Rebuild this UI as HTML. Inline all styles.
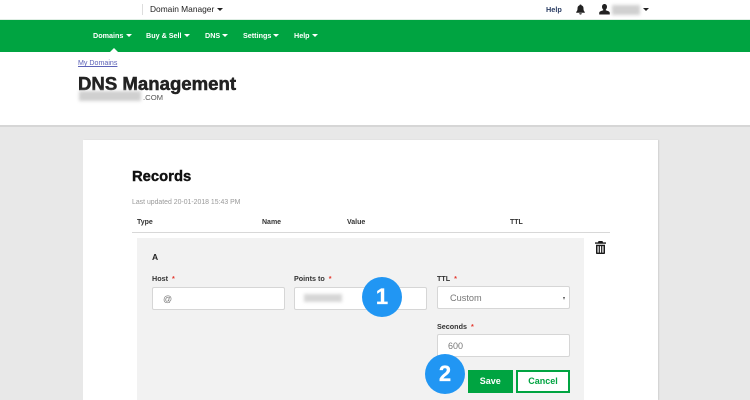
<!DOCTYPE html>
<html>
<head>
<meta charset="utf-8">
<style>
html,body{margin:0;padding:0}
body{width:750px;height:400px;overflow:hidden;position:relative;background:#e8e8e8;font-family:"Liberation Sans",sans-serif;color:#222}
.a{position:absolute;white-space:nowrap}
.tri{position:absolute;width:0;height:0;border-left:3px solid transparent;border-right:3px solid transparent;border-top:3.500px solid #fff}
.tri.d{border-left-width:3px;border-right-width:3px;border-top-width:3.500px;border-top-color:#222}
.nav{font-size:7.200px;font-weight:bold;color:#fff;top:31px;line-height:10px}
.lbl{font-size:7.200px;font-weight:bold;color:#333;line-height:10px}
.lbl i{color:#e4392f;font-style:normal;margin-left:4px}
.th{font-size:7px;font-weight:bold;color:#333;line-height:10px;top:218px}
.inp{position:absolute;box-sizing:border-box;background:#fff;border:1px solid #d6d6d6;border-radius:2px;height:23px;color:#777;font-size:9px;line-height:23px}
.blur{position:absolute;background:#d0d0d0;filter:blur(1.500px)}
.num{position:absolute;width:40px;height:40px;border-radius:50%;background:#2196f3;color:#fff;font-weight:bold;font-size:22px;line-height:40px;text-align:center;-webkit-text-stroke:.3px #fff}
</style>
</head>
<body>
<div class="a" style="left:0;top:0;width:750px;height:125px;background:#fff;border-bottom:2px solid #d6d6d6"></div>

<div class="a" style="left:142px;top:4px;width:1px;height:11px;background:#ddd"></div>
<div class="a" style="left:150px;top:4px;font-size:8.400px;line-height:11px;color:#222">Domain Manager</div>
<div class="tri d" style="left:217px;top:8px"></div>

<div class="a" style="left:546px;top:4px;font-size:7.300px;font-weight:bold;line-height:11px;color:#2a3d63">Help</div>
<svg class="a" style="left:576px;top:4px" width="9" height="11" viewBox="0 0 9 11"><path fill="#222" d="M4.500 0.500c.6 0 1 .4 1 .9 1.500.4 2 1.600 2 3.100 0 2 .5 2.500 1.300 3.500v.7H.2v-.7C1 7 1.500 6.500 1.500 4.500c0-1.500.5-2.700 2-3.100 0-.5.4-.9 1-.9zM3.200 9.200h2.600c0 .8-.6 1.300-1.300 1.300s-1.300-.5-1.300-1.300z"/></svg>
<svg class="a" style="left:599px;top:4px" width="11" height="11" viewBox="0 0 11 11"><path fill="#222" d="M5.500 0C7 0 8 1.200 8 2.800 8 4 7.500 5 6.800 5.600v.8c1.800.4 4 1 4 2.600V10.500H.2V9c0-1.600 2.200-2.200 4-2.600v-.8C3.500 5 3 4 3 2.800 3 1.200 4 0 5.500 0z"/></svg>
<div class="blur" style="left:612px;top:5px;width:28px;height:10px"></div>
<div class="tri d" style="left:643px;top:8px"></div>

<div class="a" style="left:0;top:19px;width:750px;height:33px;background:#00a441;border-top:1px solid #dfeee4;box-sizing:border-box"></div>
<div class="a nav" style="left:93px">Domains</div><div class="tri" style="left:126px;top:34px"></div>
<div class="a nav" style="left:146px">Buy &amp; Sell</div><div class="tri" style="left:184px;top:34px"></div>
<div class="a nav" style="left:205px">DNS</div><div class="tri" style="left:222px;top:34px"></div>
<div class="a nav" style="left:243px">Settings</div><div class="tri" style="left:273px;top:34px"></div>
<div class="a nav" style="left:294px">Help</div><div class="tri" style="left:312px;top:34px"></div>
<div class="a" style="left:110px;top:48px;width:0;height:0;border-left:4px solid transparent;border-right:4px solid transparent;border-bottom:4px solid #fff"></div>

<div class="a" style="left:78px;top:58px;font-size:7.100px;line-height:10px;color:#5c62b8;text-decoration:underline">My Domains</div>
<div class="a" style="left:78px;top:72px;font-size:18.600px;font-weight:bold;line-height:24px;color:#222;-webkit-text-stroke:.5px #222">DNS Management</div>
<div class="blur" style="left:79px;top:91px;width:62px;height:10px"></div>
<div class="a" style="left:143px;top:92px;font-size:7.700px;line-height:11px;color:#555">.COM</div>

<div class="a" style="left:83px;top:140px;width:575px;height:260px;background:#fff;box-shadow:1px 0 1px #d0d0d0"></div>
<div class="a" style="left:132px;top:168px;font-size:14.800px;font-weight:bold;line-height:19px;color:#111;-webkit-text-stroke:.4px #111">Records</div>
<div class="a" style="left:132px;top:198px;font-size:6.900px;line-height:10px;color:#999">Last updated 20-01-2018 15:43 PM</div>
<div class="a th" style="left:137px">Type</div>
<div class="a th" style="left:262px">Name</div>
<div class="a th" style="left:347px">Value</div>
<div class="a th" style="left:510px">TTL</div>
<div class="a" style="left:132px;top:232px;width:478px;height:1px;background:#d8d8d8"></div>

<div class="a" style="left:137px;top:238px;width:447px;height:162px;background:#f2f2f2"></div>
<div class="a" style="left:152px;top:252px;font-size:8.500px;font-weight:bold;line-height:11px;color:#222">A</div>

<div class="a lbl" style="left:152px;top:274px">Host<i>*</i></div>
<div class="a lbl" style="left:294px;top:274px">Points to<i>*</i></div>
<div class="a lbl" style="left:437px;top:274px">TTL<i>*</i></div>
<div class="inp" style="left:152px;top:286.500px;width:133px;padding-left:10px">@</div>
<div class="inp" style="left:294px;top:286.500px;width:133px"></div>
<div class="blur" style="left:304px;top:294px;width:38px;height:8px;background:#d6d6d6"></div>
<div class="inp" style="left:437px;top:286px;width:133px;padding-left:12px;font-size:9.200px">Custom</div>
<div class="tri d" style="left:563px;top:296.500px;border-left-width:1.500px;border-right-width:1.500px;border-top-width:3px;border-top-color:#555"></div>

<div class="a lbl" style="left:437px;top:322px">Seconds<i>*</i></div>
<div class="inp" style="left:437px;top:334px;width:133px;padding-left:10px">600</div>

<div class="a" style="left:468px;top:370px;width:44.500px;height:23px;background:#00a441;color:#fff;font-size:9px;font-weight:bold;line-height:23px;text-align:center">Save</div>
<div class="a" style="left:516px;top:370px;width:54px;height:23px;box-sizing:border-box;background:#fff;border:2px solid #00a441;color:#00a441;font-size:9px;font-weight:bold;line-height:19px;text-align:center">Cancel</div>

<div class="num" style="left:362px;top:277px">1</div>
<div class="num" style="left:425px;top:354px">2</div>

<svg class="a" style="left:595px;top:241px" width="11" height="13" viewBox="0 0 11 14" preserveAspectRatio="none"><path fill="#1a1a1a" fill-rule="evenodd" d="M3.500 0h4l.5 1.500h3V3H0V1.500h3zM1 4h9v9c0 .6-.4 1-1 1H2c-.6 0-1-.4-1-1zM2.500 5.500v7h1.200v-7zM4.900 5.500v7h1.200v-7zM7.300 5.500v7h1.200v-7z"/></svg>
</body>
</html>
